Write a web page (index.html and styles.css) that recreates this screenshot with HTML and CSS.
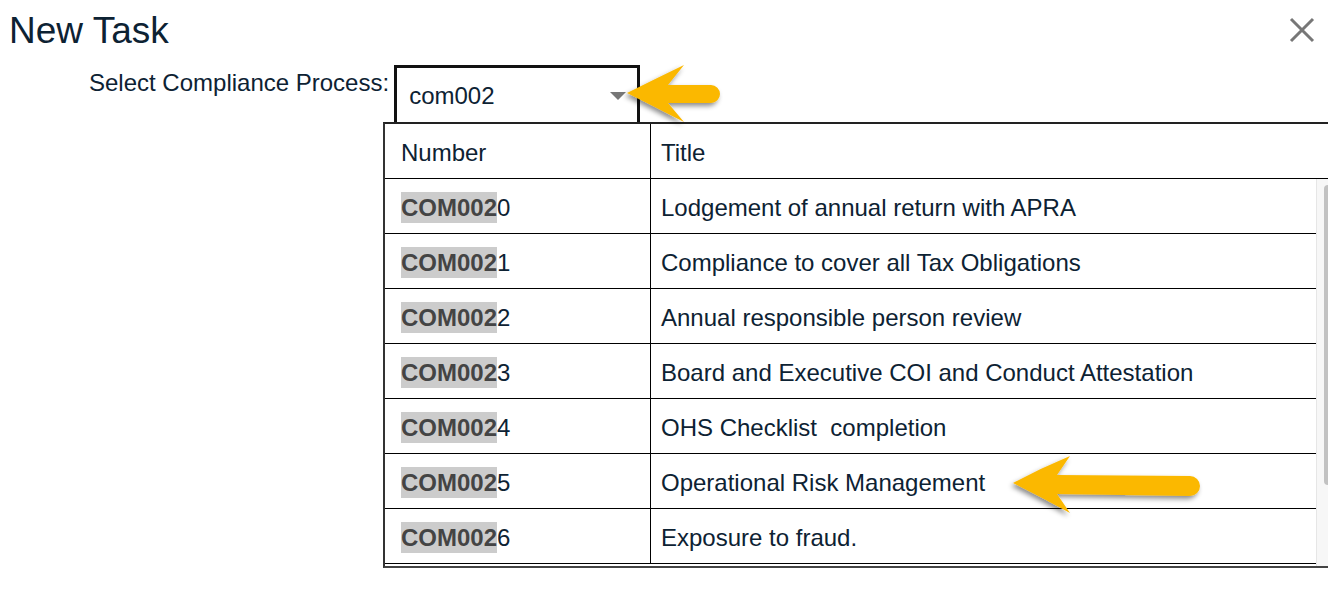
FILE: index.html
```html
<!DOCTYPE html>
<html lang="en">
<head>
  <meta charset="UTF-8">
  <meta name="viewport" content="width=device-width, initial-scale=1.0">
  <title>New Task</title>
  <link rel="stylesheet" href="styles.css">
</head>
<body>
  <div class="header">
    <h1>New Task</h1>
    <button class="close-button" title="Close">
      <svg width="26" height="26" viewBox="0 0 26 26">
        <path d="M2 2 L24 24 M24 2 L2 24" stroke="#777" stroke-width="3" fill="none"/>
      </svg>
    </button>
  </div>

  <div class="form-row">
    <label class="field-label" for="processSelect">Select Compliance Process:</label>
    <div class="select-box" id="processSelect">
      <span class="select-value">com002</span>
      <svg class="select-caret" width="16" height="8" viewBox="0 0 16 8">
        <path d="M0 0 L16 0 L8 8 Z" fill="#777"/>
      </svg>
    </div>
  </div>

  <!-- dropdown list under the select -->
  <div class="dropdown">
    <div class="list-head">
      <div class="cell num">Number</div>
      <div class="cell title">Title</div>
    </div>
    <div class="list-body">
      <div class="rows">
        <div class="list-row"><div class="cell num"><span class="match">COM002</span>0</div><div class="cell title">Lodgement of annual return with APRA</div></div>
        <div class="list-row"><div class="cell num"><span class="match">COM002</span>1</div><div class="cell title">Compliance to cover all Tax Obligations</div></div>
        <div class="list-row"><div class="cell num"><span class="match">COM002</span>2</div><div class="cell title">Annual responsible person review</div></div>
        <div class="list-row"><div class="cell num"><span class="match">COM002</span>3</div><div class="cell title">Board and Executive COI and Conduct Attestation</div></div>
        <div class="list-row"><div class="cell num"><span class="match">COM002</span>4</div><div class="cell title">OHS Checklist&nbsp; completion</div></div>
        <div class="list-row"><div class="cell num"><span class="match">COM002</span>5</div><div class="cell title">Operational Risk Management</div></div>
        <div class="list-row"><div class="cell num"><span class="match">COM002</span>6</div><div class="cell title">Exposure to fraud.</div></div>
      </div>
      <div class="scrollbar"><div class="scroll-thumb"></div></div>
    </div>
  </div>

  <!-- callout arrows drawn over the screenshot -->
  <svg class="callouts" width="1328" height="598" viewBox="0 0 1328 598">
    <defs>
      <filter id="shadow" x="-20%" y="-40%" width="140%" height="180%">
        <feDropShadow dx="-2" dy="3" stdDeviation="2.5" flood-color="#000" flood-opacity="0.45"/>
      </filter>
    </defs>
    <path filter="url(#shadow)" fill="#fbb800"
      d="M627,93 Q655,79 684,65 L668,85 L711,85 A9,9 0 0 1 711,103 L668,103 L684,122 Q655,107 627,93 Z"/>
    <path filter="url(#shadow)" fill="#fbb800"
      d="M1013,483 Q1041,468 1070,456 L1057,475 L1190,476 A10,10 0 0 1 1190,496 L1057,494 L1070,513 Q1041,497 1013,483 Z"/>
  </svg>
</body>
</html>
```

FILE: styles.css
```css
body {
  margin: 0;
  font-family: "Liberation Sans", Arial, sans-serif;
  color: #0d2233;
  background: #fff;
  overflow: hidden;
}
.header {
  display: flex;
  justify-content: space-between;
  align-items: flex-start;
  padding: 10px 13px 0 9px;
}
.header h1 {
  margin: 0;
  font-size: 37px;
  font-weight: normal;
  line-height: 41px;
}
.close-button {
  margin-top: 7px;
  padding: 0;
  border: none;
  background: none;
  cursor: pointer;
}
.form-row {
  display: flex;
  align-items: flex-start;
  padding-left: 89px;
  margin-top: 14px;
}
.field-label {
  font-size: 24px;
  line-height: 28px;
  padding-top: 4px;
  margin-right: 5px;
}
.select-box {
  box-sizing: border-box;
  width: 246px;
  height: 64px;
  border: 3px solid #111;
  padding: 14px 11px 0 12px;
  display: flex;
  justify-content: space-between;
  align-items: flex-start;
  font-size: 24px;
  line-height: 28px;
}
.select-caret {
  margin-top: 10px;
}

/* dropdown list */
.dropdown {
  position: absolute;
  left: 383px;
  top: 122px;
  right: 0;
  z-index: 2;
  background: #fff;
  border-top: 2px solid #222;
  border-left: 2px solid #333;
  border-bottom: 2px solid #444;
  font-size: 24px;
}
.list-head,
.list-row {
  display: grid;
  grid-template-columns: 266px 1fr;
  height: 55px;
  box-sizing: border-box;
  border-bottom: 1px solid #000;
}
.cell {
  line-height: 51px;
  padding-top: 3px;
  white-space: nowrap;
}
.cell.num {
  padding-left: 16px;
  border-right: 1px solid #000;
}
.cell.title {
  padding-left: 10px;
}
.list-body {
  display: flex;
  height: 387px;
}
.rows {
  flex: 1;
}
.scrollbar {
  width: 11px;
  background: #f7f7f7;
  border-left: 1px solid #e6e6e6;
}
.scroll-thumb {
  height: 300px;
  margin: 6px 0 0 7px;
  background: #c2c2c2;
  border-radius: 6px 0 0 6px;
}
.match {
  background: #cccccc;
  color: #444;
  font-weight: bold;
  padding: 2px 0;
}

.callouts {
  position: absolute;
  top: 0;
  left: 0;
  z-index: 5;
  pointer-events: none;
}
```
